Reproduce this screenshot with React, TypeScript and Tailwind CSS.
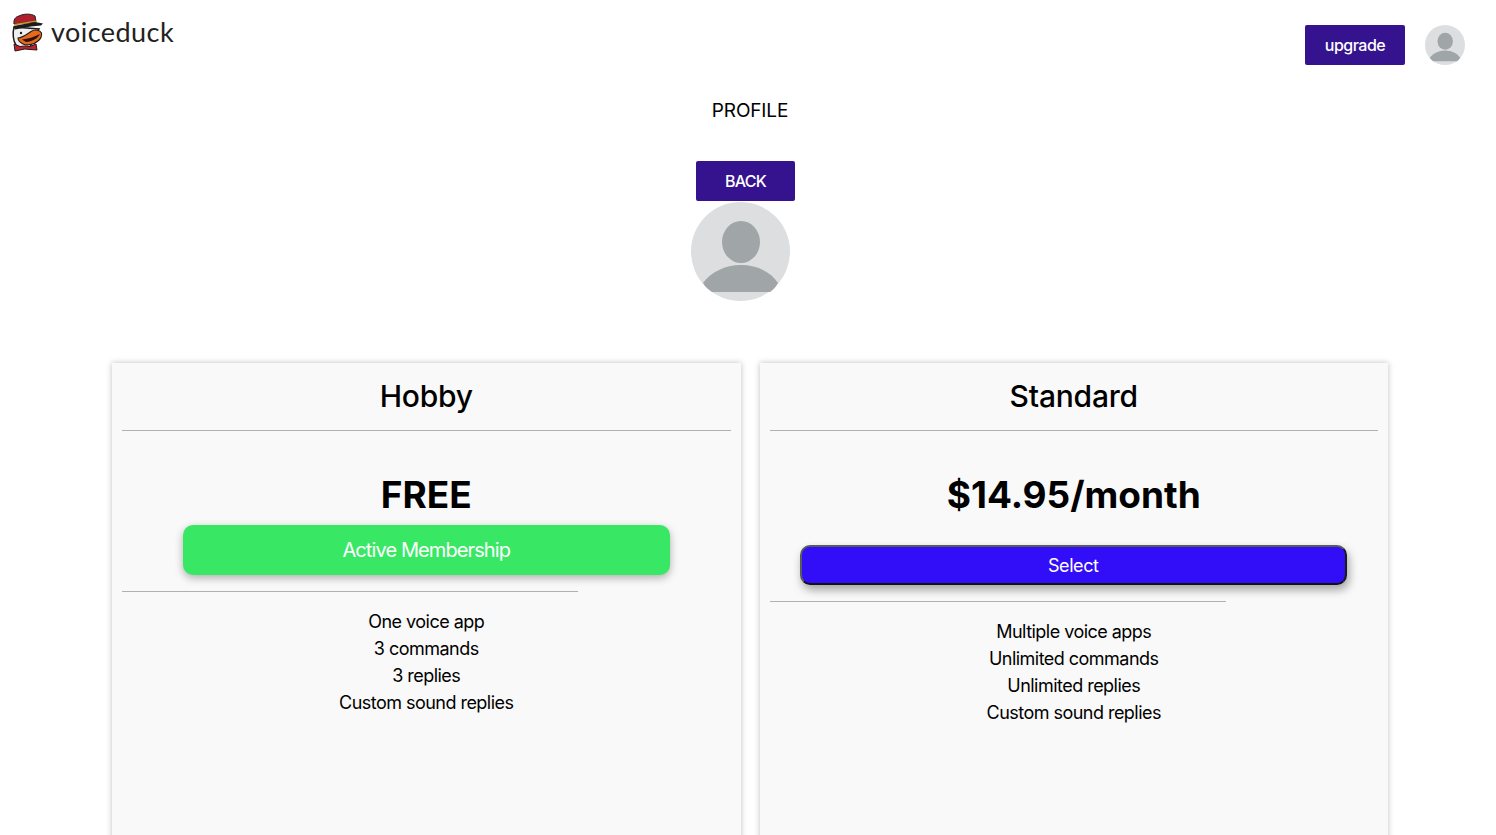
import React from 'react';

const FONT = "font-['Inter',sans-serif]";

const HOBBY = ['One voice app', '3 commands', '3 replies', 'Custom sound replies'];
const STANDARD = ['Multiple voice apps', 'Unlimited commands', 'Unlimited replies', 'Custom sound replies'];

function Avatar({ className }: { className: string }) {
  return (
    <svg viewBox="0 0 99 99" className={className}>
      <circle cx="49.5" cy="49.5" r="49.5" fill="#dcdee0" />
      <ellipse cx="50" cy="40" rx="19" ry="21" fill="#a0a5a8" />
      <path d="M12 81 C20 70 34 63 50 63 C66 63 80 70 87 81 C85 85 82 88 79 90 L21 90 C18 88 14 85 12 81 Z" fill="#a0a5a8" />
    </svg>
  );
}

function Logo() {
  return (
    <svg viewBox="0 0 33 39" className="w-[33px] h-[39px]">
      {/* head */}
      <path d="M3 14 C1.5 20 2 28 5 32 C8 35 14 36 19 34 L28 16 Z" fill="#efefef" stroke="#1c1c1c" strokeWidth="1.5" />
      {/* hat */}
      <path d="M3 11 C2.5 7 4 4 8 3 C13 0.5 20 0.5 24 3 L25 9 Z" fill="#b01f2c" stroke="#1c1c1c" strokeWidth="1" />
      <path d="M3 11 L25 7.5 L25 9 L3 12.5 Z" fill="#c9962a" />
      <path d="M2.5 13 L24 9 L32 10.5 L30 12.5 L20 13.5 L4 16.5 Z" fill="#1c1c1c" />
      {/* bill */}
      <path d="M7 25 C12 24.5 16 21 20 18.5 C24 16 29 17 30.5 20 C31 23 29.5 26 27 28 C23 31.5 16 33 12 31 C9 29.5 7 27 7 25 Z" fill="#e8681c" stroke="#1c1c1c" strokeWidth="1.1" />
      <path d="M11 26.5 C17 26 23 24 29 21 C27 25.5 21 28.5 15 29 Z" fill="#2e120e" />
      <circle cx="10" cy="20" r="1.2" fill="#1c1c1c" />
      {/* bow */}
      <path d="M3 31 L9 33.5 L14 33 L19 33.5 L25 31 L26 37 L19 36.5 L14 36 L9 37 L4 38 Z" fill="#c3202c" stroke="#1c1c1c" strokeWidth="1" />
    </svg>
  );
}

function PlanCard({ title, price, features, children }: { title: string; price: string; features: string[]; children: React.ReactNode }) {
  return (
    <div className="flex-1 h-[600px] bg-[#f9f9f9] px-[10px] shadow-[0_0_6px_rgba(0,0,0,0.25)] text-black">
      <h2 className="text-center text-[30px] leading-[36px] font-[550] tracking-[-0.2px] pt-[15px] pb-[16px] border-b border-[#b0b0b0] box-content">{title}</h2>
      <div className="text-center text-[37px] leading-[44px] font-bold mt-[42px]">{price}</div>
      {children}
      <ul className="text-center text-[18px] leading-[27px] tracking-[-0.53px] mt-[16px]">
        {features.map(f => (
          <li key={f}>{f}</li>
        ))}
      </ul>
    </div>
  );
}

export default function App() {
  return (
    <div className={`${FONT} w-[1496px] h-[835px] overflow-hidden bg-white relative`}>
      {/* Header */}
      <header className="flex justify-between items-start h-[89px]">
        <div className="flex items-center gap-[7px] pl-[11px] pt-[13px]">
          <Logo />
          <span className="font-['Lato',sans-serif] text-[27px] leading-[38px] tracking-[0.45px] text-[#222] -mt-[1px]">voiceduck</span>
        </div>
        <div className="flex items-center gap-[20px] pt-[25px] pr-[31px]">
          <button className="w-[100px] h-[40px] bg-[#35138f] rounded-[2px] text-white text-[16px] font-medium tracking-[-0.5px]">upgrade</button>
          <Avatar className="w-[40px] h-[40px]" />
        </div>
      </header>

      {/* Profile */}
      <main className="flex flex-col items-center">
        <h1 className="text-[19px] leading-[44px] h-[42px] ml-[4px] tracking-[-0.15px] text-black">PROFILE</h1>
        <button className="w-[99px] h-[40px] mt-[30px] mr-[5px] bg-[#35138f] rounded-[2px] text-white text-[16px] font-medium tracking-[-0.7px]">BACK</button>
        <Avatar className="w-[99px] h-[99px] mt-[1px] mr-[15px]" />
      </main>

      {/* Plans */}
      <section className="flex gap-[19px] px-[112px] pr-[108px] mt-[62px]">
        <PlanCard title="Hobby" price="FREE" features={HOBBY}>
          <div className="mx-[61px] mt-[8px]">
            <button className="w-full h-[50px] rounded-[10px] bg-[#38e865] text-white text-[20px] tracking-[-0.9px] shadow-[0_3px_8px_rgba(0,0,0,0.3)]">Active Membership</button>
          </div>
          <div className="w-3/4 border-b border-[#b0b0b0] mt-[16px]" />
        </PlanCard>
        <PlanCard title="Standard" price="$14.95/month" features={STANDARD}>
          <div className="ml-[30px] mr-[31px] mt-[28px]">
            <button className="w-full h-[40px] rounded-[10px] bg-[#320df7] text-white text-[18px] tracking-[-0.4px] border-2 border-t-[#5a5a5a] border-l-[#5a5a5a] border-r-[#1a1a1a] border-b-[#111] shadow-[2px_5px_10px_rgba(0,0,0,0.35)]">Select</button>
          </div>
          <div className="w-3/4 border-b border-[#b0b0b0] mt-[16px]" />
        </PlanCard>
      </section>
    </div>
  );
}
